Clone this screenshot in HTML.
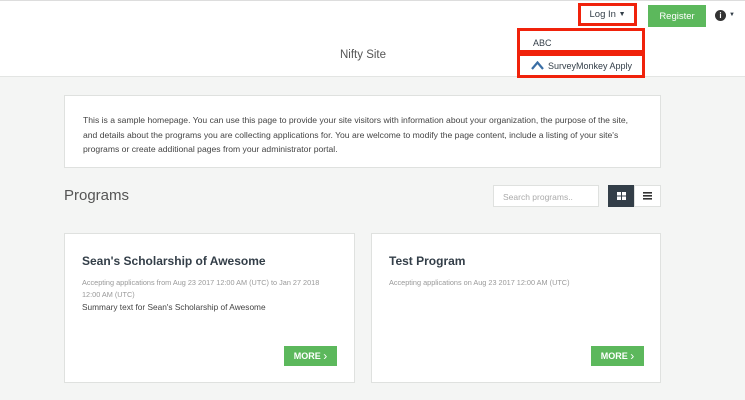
<!DOCTYPE html>
<html><head><meta charset="utf-8"><style>
*{box-sizing:border-box;margin:0;padding:0}
body{width:745px;height:400px;overflow:hidden;background:#f4f5f4;font-family:"Liberation Sans",sans-serif;color:#333e48;position:relative}
.hdr{position:absolute;left:0;top:0;width:745px;height:77px;background:#fff;border-top:1px solid #ddd;border-bottom:1px solid #e3e5e3}
.abs{position:absolute}
.red{border:3px solid #f0220b}
.box{background:#fff;border:1px solid #dfe1df}
.btn{background:#5cb85c;color:#fff;font-size:9px;font-weight:bold;display:flex;align-items:center;justify-content:center}
</style></head><body>
<div class="hdr"></div>
<div class="abs" style="left:340px;top:49px;font-size:11.5px;color:#555">Nifty Site</div>
<div class="abs red" style="left:578px;top:3px;width:59px;height:23px;background:#fff;font-size:9.5px;display:flex;align-items:center;justify-content:center">Log In&nbsp;<span style="font-size:7px">▼</span></div>
<div class="abs btn" style="left:648px;top:5px;width:58px;height:22px;font-weight:normal;font-size:9.5px">Register</div>
<div class="abs" style="left:715px;top:10px;width:11px;height:11px;border-radius:50%;background:#333;color:#fff;font-size:8px;font-weight:bold;text-align:center;line-height:11px">i</div>
<div class="abs" style="left:729px;top:12px;font-size:6px">▼</div>
<div class="abs red" style="left:517px;top:28px;width:128px;height:25px;background:#fff;font-size:9px;padding:7px 0 0 13px">ABC</div>
<div class="abs red" style="left:517px;top:53px;width:128px;height:25px;background:#fff;font-size:9px;padding-left:11px;display:flex;align-items:center">
<svg width="13" height="9" viewBox="0 0 13 9" style="margin-right:4px"><path d="M1 8 L6.5 1.5 L12 8" fill="none" stroke="#3a6ea5" stroke-width="2.2"/></svg>SurveyMonkey Apply</div>
<div class="abs box" style="left:64px;top:95px;width:597px;height:73px;padding:17px 0 0 18px;font-size:8.6px;line-height:14.5px;color:#444;white-space:nowrap">This is a sample homepage. You can use this page to provide your site visitors with information about your organization, the purpose of the site,<br>and details about the programs you are collecting applications for. You are welcome to modify the page content, include a listing of your site's<br>programs or create additional pages from your administrator portal.</div>
<div class="abs" style="left:64px;top:187px;font-size:15px;color:#555">Programs</div>
<div class="abs box" style="left:493px;top:185px;width:106px;height:22px;font-size:8.5px;color:#aaa;padding:6px 0 0 9px">Search programs..</div>
<div class="abs" style="left:608px;top:185px;width:27px;height:22px;background:#333e48"><svg width="27" height="22"><rect x="9" y="7" width="4" height="3.5" fill="#fff"/><rect x="14" y="7" width="4" height="3.5" fill="#fff"/><rect x="9" y="11.5" width="4" height="3.5" fill="#fff"/><rect x="14" y="11.5" width="4" height="3.5" fill="#fff"/></svg></div>
<div class="abs box" style="left:634px;top:185px;width:27px;height:22px"><svg width="25" height="20"><rect x="8" y="6" width="9" height="1.6" fill="#333"/><rect x="8" y="9" width="9" height="1.6" fill="#333"/><rect x="8" y="12" width="9" height="1.6" fill="#333"/></svg></div>
<div class="abs box" style="left:64px;top:233px;width:291px;height:150px;padding:20px 0 0 17px">
<div style="font-size:12px;font-weight:bold;color:#333e48">Sean's Scholarship of Awesome</div>
<div style="font-size:7.3px;color:#999;line-height:12px;margin-top:9px">Accepting applications from Aug 23 2017 12:00 AM (UTC) to Jan 27 2018<br>12:00 AM (UTC)</div>
<div style="font-size:8.3px;color:#444;margin-top:1px">Summary text for Sean's Scholarship of Awesome</div>
</div>
<div class="abs btn" style="left:284px;top:346px;width:53px;height:20px">MORE&nbsp;<span style="font-size:12px;font-weight:normal">›</span></div>
<div class="abs box" style="left:371px;top:233px;width:290px;height:150px;padding:20px 0 0 17px">
<div style="font-size:12px;font-weight:bold;color:#333e48">Test Program</div>
<div style="font-size:7.3px;color:#999;line-height:12px;margin-top:9px">Accepting applications on Aug 23 2017 12:00 AM (UTC)</div>
</div>
<div class="abs btn" style="left:591px;top:346px;width:53px;height:20px">MORE&nbsp;<span style="font-size:12px;font-weight:normal">›</span></div>
</body></html>
